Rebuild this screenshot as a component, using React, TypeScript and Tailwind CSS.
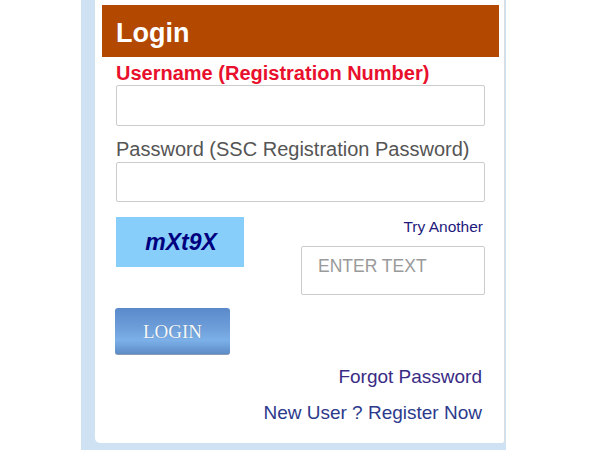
import React from "react";

export default function App() {
  return (
    <div className="w-[600px] h-[450px] bg-white overflow-hidden" style={{ fontFamily: '"Liberation Sans", Arial, sans-serif' }}>
      <div className="ml-[81px] w-[425px] h-[450px] bg-[#cfe2f3] pl-[14px] pr-[1px]">
        <div className="h-[443px] bg-white rounded-bl-[5px] rounded-br-[3px] border-r border-[#dcdcdc] pl-[7px] pr-[5px] pt-[5px]">
          <div className="h-[52px] bg-[#b34800] pl-[14px] pt-[4px]">
            <span className="text-white font-bold text-[27px] leading-[48px]">Login</span>
          </div>
          <div className="px-[14px]">
            <div className="mt-[4px] text-[20px] leading-[24px] font-bold text-[#e8102c]">Username (Registration Number)</div>
            <input className="block w-full h-[41px] border border-[#cccccc] rounded-[2px] outline-none px-2 text-[18px]" />
            <div className="mt-[11px] text-[20px] leading-[24px] text-[#555555]">Password (SSC Registration Password)</div>
            <input type="password" className="mt-[1px] block w-full h-[40px] border border-[#cccccc] rounded-[2px] outline-none px-2 text-[18px]" />
            <div className="mt-[15px] flex justify-between items-start">
              <div className="w-[128px] h-[50px] bg-[#87cefa] flex items-center justify-center">
                <span className="text-[23px] font-bold italic text-[#00007f] leading-none pl-[2px]">mXt9X</span>
              </div>
              <div className="w-[184px] flex flex-col items-end">
                <div className="text-[15.5px] leading-[20px] text-[#1e1a7c] pr-[2px]">Try Another</div>
                <input
                  placeholder="ENTER TEXT"
                  className="mt-[9px] block w-full h-[49px] border border-[#cccccc] rounded-[2px] outline-none pl-[16px] pb-[9px] text-[17.5px] placeholder:text-[#9a9a9a]"
                />
              </div>
            </div>
            <button
              className="mt-[13px] block w-[115px] h-[47px] rounded-[3px] border-b border-[#8a9bb0] bg-[linear-gradient(to_bottom,#5a8acb_0%,#6e9fda_45%,#7cb0e8_70%,#5d8bc6_100%)] text-[#f4f8fc] text-[19px] leading-none -ml-[1px]"
              style={{ fontFamily: '"Liberation Serif", "Times New Roman", serif', textShadow: "0 0 1px rgba(0,0,0,0.25)" }}
            >
              LOGIN
            </button>
            <div className="mt-[10px] text-right pr-[3px] text-[19px] leading-[24px] text-[#3a2b85]">Forgot Password</div>
            <div className="mt-[12px] text-right pr-[3px] text-[19px] leading-[24px] text-[#2c3a8c]">New User ? Register Now</div>
          </div>
        </div>
      </div>
    </div>
  );
}
